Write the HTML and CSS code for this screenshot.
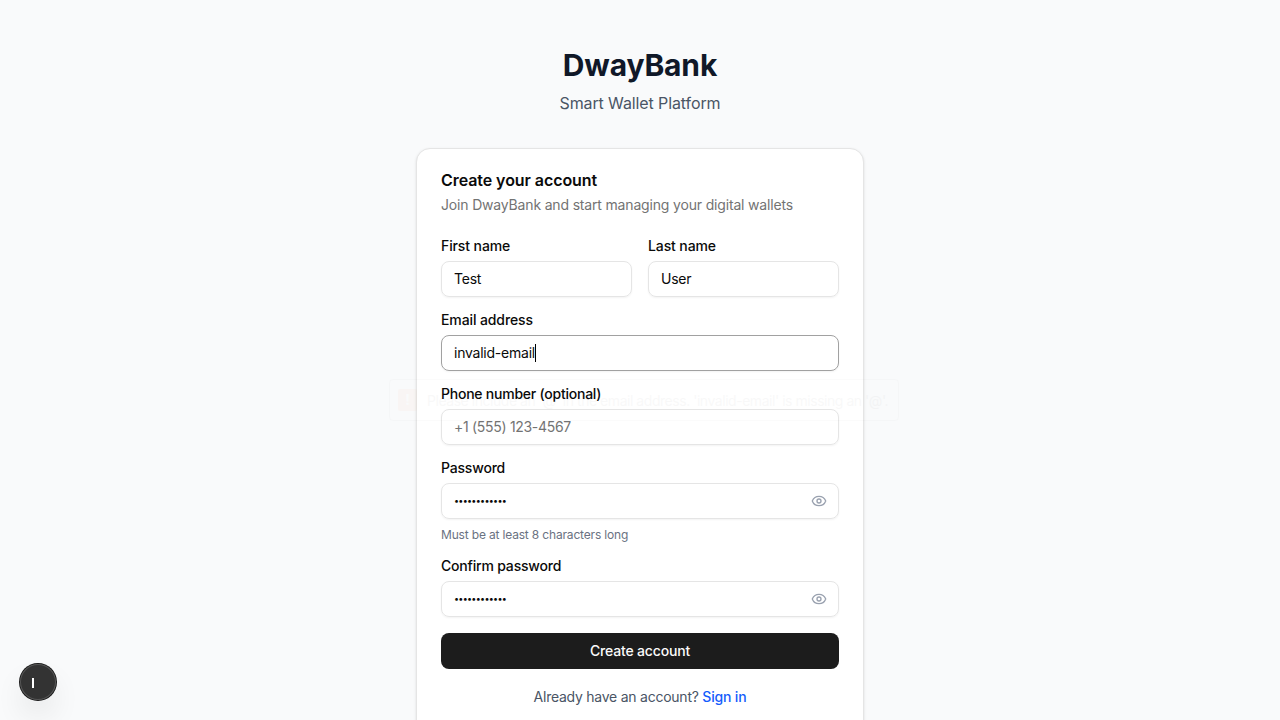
FILE: index.html
```html
<!DOCTYPE html>
<html lang="en">
<head>
<meta charset="utf-8">
<title>DwayBank</title>
<link rel="stylesheet" href="styles.css">
</head>
<body>
<main class="page">
  <header class="brand">
    <h1 class="brand-name">DwayBank</h1>
    <p class="brand-tag">Smart Wallet Platform</p>
  </header>
  <section class="card">
    <h2 class="card-title">Create your account</h2>
    <p class="card-desc">Join DwayBank and start managing your digital wallets</p>
    <form class="form">
      <div class="row">
        <div class="group"><label class="label">First name</label><div class="field">Test</div></div>
        <div class="group"><label class="label">Last name</label><div class="field">User</div></div>
      </div>
      <div class="group"><label class="label">Email address</label><div class="field field-focus">invalid-email<i class="caret"></i></div></div>
      <div class="group"><label class="label label-tight">Phone number (optional)</label><div class="field placeholder">+1 (555) 123-4567</div></div>
      <div class="group">
        <label class="label label-wide">Password</label>
        <div class="field field-secret"><span class="dots">••••••••••••</span><svg class="eye" viewBox="0 0 24 24"><path d="M2.06 12.35a1 1 0 0 1 0-.7 10.75 10.75 0 0 1 19.88 0 1 1 0 0 1 0 .7 10.75 10.75 0 0 1-19.88 0"/><circle cx="12" cy="12" r="3"/></svg></div>
        <p class="hint">Must be at least 8 characters long</p>
      </div>
      <div class="group">
        <label class="label label-wide">Confirm password</label>
        <div class="field field-secret"><span class="dots">••••••••••••</span><svg class="eye" viewBox="0 0 24 24"><path d="M2.06 12.35a1 1 0 0 1 0-.7 10.75 10.75 0 0 1 19.88 0 1 1 0 0 1 0 .7 10.75 10.75 0 0 1-19.88 0"/><circle cx="12" cy="12" r="3"/></svg></div>
      </div>
      <button class="submit" type="button">Create account</button>
    </form>
    <p class="signin">Already have an account? <a class="link">Sign in</a></p>
  </section>
</main>
<div class="bubble"><span class="bubble-icon">!</span><span class="bubble-text">Please include an '@' in the email address. 'invalid-email' is missing an '@'.</span></div>
<div class="badge"><i class="badge-bar"></i></div>
</body>
</html>
```
FILE: styles.css
```css
* { box-sizing: border-box; margin: 0; padding: 0; }
body { height: 720px; overflow: hidden; background: #f9fafb; color: #0a0a0a; font-family: Inter, "Liberation Sans", sans-serif; font-size: 14px; }
.page { width: 448px; margin: 0 auto; padding-top: 47px; }
.brand { text-align: center; margin-bottom: 33px; }
.brand-name { font-size: 30px; line-height: 36px; font-weight: 700; letter-spacing: -.15px; color: #101828; }
.brand-tag { margin-top: 8px; font-size: 16px; line-height: 24px; letter-spacing: -.11px; color: #4a5565; }
.card { padding: 23px 24px 24px; border: 1px solid #e5e5e5; border-radius: 14px; background: #fff; box-shadow: 0 1px 3px rgba(0,0,0,.1), 0 1px 2px -1px rgba(0,0,0,.1); }
.card-title { font-size: 16px; line-height: 16px; font-weight: 600; letter-spacing: -.07px; }
.card-desc { margin-top: 7px; line-height: 20px; letter-spacing: -.17px; color: #737373; }
.form { display: flex; flex-direction: column; gap: 16px; margin-top: 24px; }
.row { display: grid; grid-template-columns: 1fr 1fr; gap: 16px; }
.group { display: flex; flex-direction: column; gap: 8px; }
.label { font-size: 14px; line-height: 14px; font-weight: 500; letter-spacing: -.11px; }
.label-tight { letter-spacing: -.235px; }
.label-wide { letter-spacing: -.19px; }
.field { display: flex; align-items: center; height: 36px; padding: 0 12px 2px; border: 1px solid #e5e5e5; border-radius: 8px; box-shadow: 0 1px 2px rgba(0,0,0,.05); letter-spacing: -.23px; }
.field-focus { border-color: #a1a1a1; }
.field-secret { padding-bottom: 0; }
.placeholder { color: #737373; letter-spacing: -.3px; }
.caret { width: 1px; height: 18px; margin-top: 2px; background: #000; }
.dots { font-size: 9px; line-height: 16px; letter-spacing: -.72px; }
.eye { width: 16px; height: 16px; margin-left: auto; margin-right: -1px; fill: none; stroke: #99a1af; stroke-width: 2; stroke-linecap: round; stroke-linejoin: round; }
.hint { font-size: 12px; line-height: 16px; letter-spacing: -.17px; color: #6a7282; }
.submit { height: 36px; border: 0; border-radius: 8px; background: #1c1c1c; color: #fafafa; font: 500 14px/20px Inter, "Liberation Sans", sans-serif; letter-spacing: -.17px; }
.signin { margin-top: 18px; padding-bottom: 24px; text-align: center; line-height: 20px; letter-spacing: -.245px; color: #4a5565; }
.link { color: #155dfc; font-weight: 500; letter-spacing: -.18px; }
.bubble { position: absolute; left: 389px; top: 379px; width: 510px; height: 42px; display: flex; align-items: center; gap: 10px; padding-left: 8px; border: 1px solid rgba(0,0,0,.5); border-radius: 4px; opacity: .025; white-space: nowrap; }
.bubble-icon { flex: none; width: 19px; height: 22px; border-radius: 2px; background: #f60; color: #fff; font-weight: 700; text-align: center; line-height: 22px; }
.bubble-text { letter-spacing: -.46px; }
.badge { position: absolute; left: 20px; top: 664px; width: 36px; height: 36px; border-radius: 50%; background: #333; box-shadow: 0 0 0 1px #171717, inset 0 0 0 1px #555, 0 16px 32px -8px rgba(0,0,0,.24); }
.badge-bar { position: absolute; left: 12px; top: 14px; width: 2px; height: 10px; background: #fff; }
```
